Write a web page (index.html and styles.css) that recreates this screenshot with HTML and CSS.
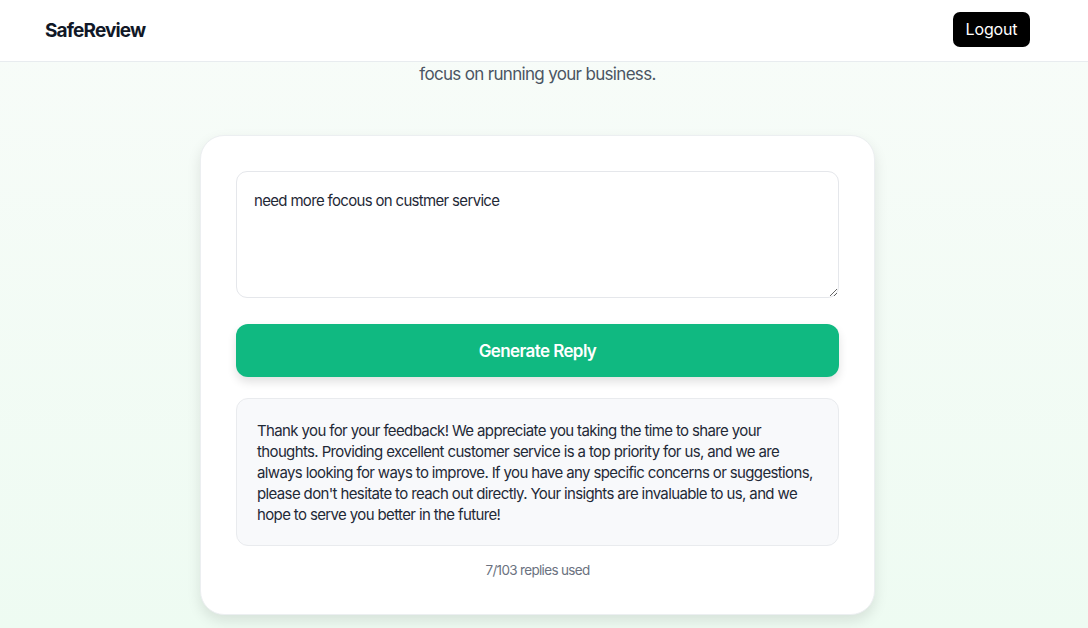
FILE: index.html
```html
<!DOCTYPE html>
<html lang="en">
<head>
<meta charset="utf-8">
<title>SafeReview</title>
<link rel="stylesheet" href="styles.css">
</head>
<body>
<header class="topbar">
  <div class="brand">SafeReview</div>
  <button class="logout">Logout</button>
</header>
<main class="page">
  <p class="subtitle">focus on running your business.</p>
  <section class="card">
    <textarea class="review">need more focous on custmer service</textarea>
    <button class="generate">Generate Reply</button>
    <div class="reply">Thank you for your feedback! We appreciate you taking the time to share your thoughts. Providing excellent customer service is a top priority for us, and we are always looking for ways to improve. If you have any specific concerns or suggestions, please don't hesitate to reach out directly. Your insights are invaluable to us, and we hope to serve you better in the future!</div>
    <p class="usage">7/103 replies used</p>
  </section>
</main>
</body>
</html>
```
FILE: styles.css
```css
* { box-sizing: border-box; }
html, body { height: 100%; }
body {
  margin: 0;
  font-family: "Inter", "Liberation Sans", sans-serif;
  letter-spacing: -0.04em;
  color: #111827;
  background: linear-gradient(180deg, #f8fcf9 0%, #eefbf2 100%);
  overflow: hidden;
}
.topbar {
  height: 62px;
  background: #ffffff;
  border-bottom: 1px solid #e8ecef;
  display: flex;
  align-items: center;
  justify-content: space-between;
  padding: 0 58px 0 45px;
}
.brand {
  font-size: 19px;
  font-weight: 700;
  color: #111827;
  letter-spacing: -0.045em;
}
.logout {
  background: #000000;
  color: #ffffff;
  border: none;
  border-radius: 7px;
  height: 35px;
  width: 77px;
  margin-top: -3px;
  font-family: inherit;
  font-size: 16px;
  letter-spacing: -0.01em;
  padding: 0;
}
.page {
  display: flex;
  flex-direction: column;
  align-items: center;
  padding-right: 13px;
}
.subtitle {
  margin: 0;
  font-size: 17px;
  line-height: 24px;
  color: #4b5563;
  letter-spacing: -0.04em;
}
.card {
  margin-top: 49px;
  width: 675px;
  background: #ffffff;
  border: 1px solid #eceff1;
  border-radius: 24px;
  box-shadow: 0 6px 14px rgba(0, 0, 0, 0.10);
  padding: 35px 35px 35px;
  display: flex;
  flex-direction: column;
}
.review {
  width: 100%;
  height: 127px;
  border: 1px solid #e5e7eb;
  border-radius: 11px;
  padding: 19px 17px;
  font-family: inherit;
  font-size: 15px;
  letter-spacing: -0.045em;
  line-height: 20px;
  color: #1f2937;
  resize: vertical;
  outline: none;
}
.generate {
  margin-top: 26px;
  height: 53px;
  width: 100%;
  border: none;
  border-radius: 12px;
  background: #10b981;
  color: #ffffff;
  font-family: inherit;
  font-size: 17px;
  font-weight: 600;
  letter-spacing: -0.035em;
  box-shadow: 0 5px 10px rgba(0, 0, 0, 0.12);
}
.reply {
  margin-top: 21px;
  background: #f8f9fb;
  border: 1px solid #e9ebee;
  border-radius: 12px;
  padding: 21px 16px 20px 20px;
  font-size: 15px;
  line-height: 21px;
  color: #1f2937;
  letter-spacing: -0.042em;
}
.usage {
  margin: 15px 0 0;
  text-align: center;
  font-size: 13.5px;
  line-height: 18px;
  color: #6b7280;
  letter-spacing: -0.05em;
}
```
